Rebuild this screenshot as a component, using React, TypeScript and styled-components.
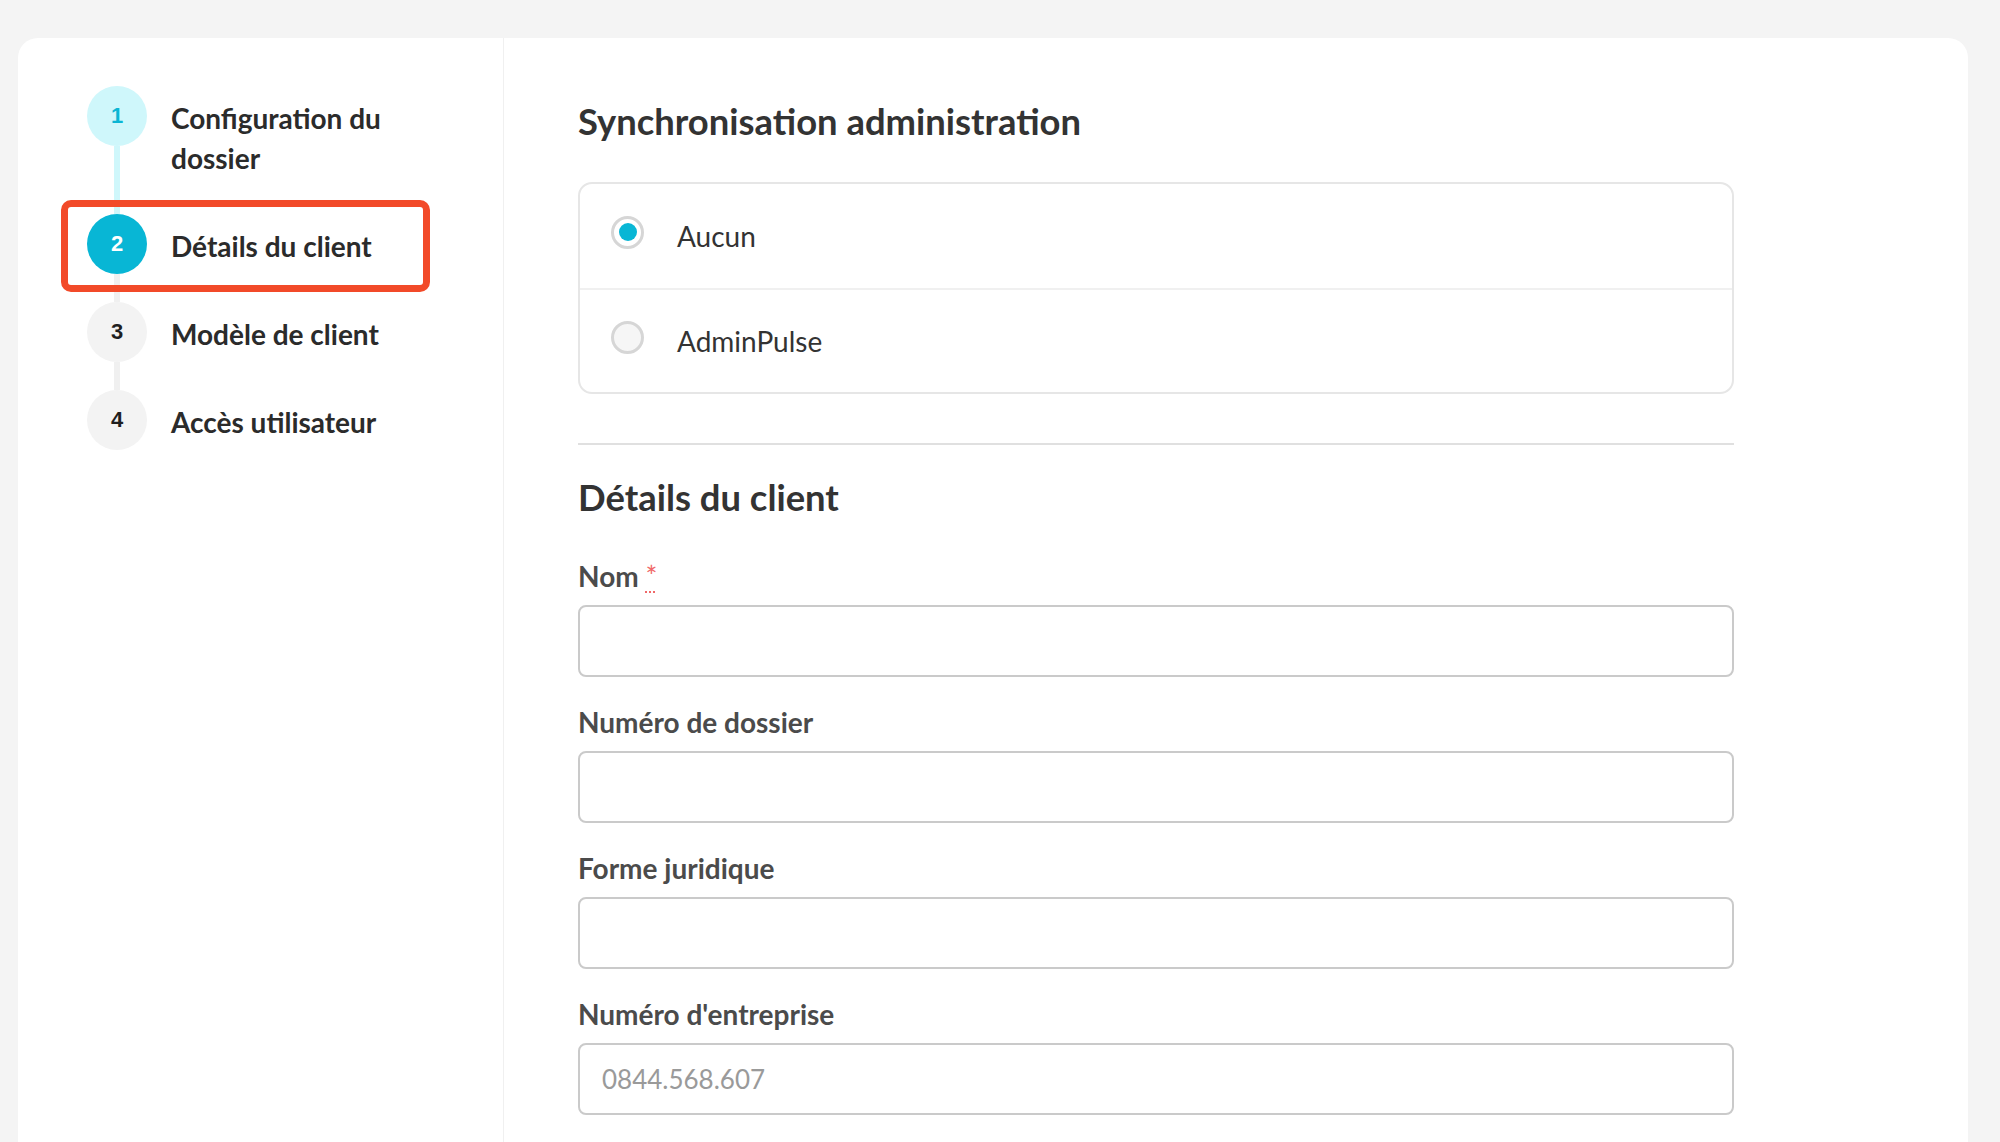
import styled, { createGlobalStyle } from "styled-components";

type StepState = "done" | "active" | "todo";

const steps: { n: number; label: string; state: StepState; highlighted?: boolean }[] = [
  { n: 1, label: "Configuration du dossier", state: "done" },
  { n: 2, label: "Détails du client", state: "active", highlighted: true },
  { n: 3, label: "Modèle de client", state: "todo" },
  { n: 4, label: "Accès utilisateur", state: "todo" },
];

const fields = [
  { label: "Nom", required: true, placeholder: "" },
  { label: "Numéro de dossier", placeholder: "" },
  { label: "Forme juridique", placeholder: "" },
  { label: "Numéro d'entreprise", placeholder: "0844.568.607" },
];

export default function App() {
  return (
    <>
      <GlobalStyle />
      <Page>
        <Card>
          <Sidebar>
            {steps.map((step, i) => (
              <Step key={step.n} $highlighted={step.highlighted}>
                <Track>
                  <Bullet $state={step.state}>{step.n}</Bullet>
                  {i < steps.length - 1 && <Connector $state={step.state} />}
                </Track>
                <StepLabel>{step.label}</StepLabel>
              </Step>
            ))}
          </Sidebar>

          <Main>
            <Content>
              <SectionTitle>Synchronisation administration</SectionTitle>
              <RadioGroup>
                <RadioOption>
                  <Radio $checked />
                  <span>Aucun</span>
                </RadioOption>
                <RadioOption>
                  <Radio />
                  <span>AdminPulse</span>
                </RadioOption>
              </RadioGroup>

              <Divider />

              <SectionTitle>Détails du client</SectionTitle>
              {fields.map((f) => (
                <Field key={f.label}>
                  <FieldLabel>
                    {f.label}
                    {f.required && (
                      <>
                        {" "}
                        <Required title="obligatoire">*</Required>
                      </>
                    )}
                  </FieldLabel>
                  <TextInput type="text" placeholder={f.placeholder} />
                </Field>
              ))}
            </Content>
          </Main>
        </Card>
      </Page>
    </>
  );
}

const GlobalStyle = createGlobalStyle`
  *,
  *::before,
  *::after {
    box-sizing: border-box;
  }

  html,
  body {
    margin: 0;
    padding: 0;
    background: #f4f4f4;
  }

  body {
    font-family: Lato, "Open Sans", sans-serif;
    color: #333;
  }
`;

const Page = styled.div`
  height: 1142px;
  overflow: hidden;
  padding: 38px 32px 0 18px;
`;

const Card = styled.div`
  display: flex;
  min-height: 1120px;
  background: #fff;
  border-radius: 20px 20px 0 0;
`;

const Sidebar = styled.nav`
  width: 486px;
  flex-shrink: 0;
  padding: 48px 0 0 69px;
  border-right: 1px solid #f0f0f0;
`;

const Step = styled.div<{ $highlighted?: boolean }>`
  position: relative;
  display: flex;
  gap: 24px;

  ${({ $highlighted }) =>
    $highlighted &&
    `
    &::after {
      content: "";
      position: absolute;
      left: -26px;
      top: -14px;
      width: 369px;
      height: 92px;
      border: 7px solid #f24a29;
      border-radius: 10px;
      pointer-events: none;
    }
  `}
`;

const Track = styled.div`
  display: flex;
  flex-direction: column;
  align-items: center;
  width: 60px;
  flex-shrink: 0;
`;

const bulletColors: Record<StepState, { bg: string; fg: string }> = {
  done: { bg: "#cff7fb", fg: "#0bb5d3" },
  active: { bg: "#08b6d5", fg: "#ffffff" },
  todo: { bg: "#f3f3f3", fg: "#1f1f1f" },
};

const Bullet = styled.div<{ $state: StepState }>`
  width: 60px;
  height: 60px;
  border-radius: 50%;
  display: flex;
  align-items: center;
  justify-content: center;
  flex-shrink: 0;
  background: ${({ $state }) => bulletColors[$state].bg};
  color: ${({ $state }) => bulletColors[$state].fg};
  font-family: "Liberation Sans", Arial, sans-serif;
  font-weight: 700;
  font-size: 22px;
`;

const Connector = styled.div<{ $state: StepState }>`
  width: 6px;
  flex: 1;
  background: ${({ $state }) => ($state === "done" ? "#cff7fb" : "#f0f0f0")};
`;

const StepLabel = styled.div`
  max-width: 250px;
  padding: 12px 0 36px;
  font-size: 28px;
  line-height: 40px;
  font-weight: 700;
  color: #2b2b2b;
`;

const Main = styled.main`
  flex: 1;
  padding: 62px 0 0 74px;
`;

const Content = styled.div`
  width: 1156px;
`;

const SectionTitle = styled.h2`
  margin: 0 0 41px;
  font-size: 36.4px;
  line-height: 42px;
  font-weight: 700;
  color: #333;
`;

const RadioGroup = styled.div`
  margin-top: -1px;
  border: 2px solid #e6e6e6;
  border-radius: 14px;
  overflow: hidden;
`;

const RadioOption = styled.label`
  display: flex;
  align-items: center;
  gap: 33px;
  height: 104px;
  padding: 0 0 0 31px;
  font-size: 28px;
  color: #333;

  & + & {
    border-top: 2px solid #f0f0f0;
  }
`;

const Radio = styled.span<{ $checked?: boolean }>`
  width: 33px;
  height: 33px;
  margin-bottom: 8px;
  border-radius: 50%;
  border: 3px solid #d6d6d6;
  background: ${({ $checked }) => ($checked ? "#fff" : "#f6f6f6")};
  display: flex;
  align-items: center;
  justify-content: center;
  flex-shrink: 0;

  &::after {
    content: "";
    width: 18px;
    height: 18px;
    border-radius: 50%;
    background: ${({ $checked }) => ($checked ? "#08b6d5" : "transparent")};
  }
`;

const Divider = styled.hr`
  margin: 49px 0 31px;
  border: none;
  height: 2px;
  background: #e0e0e0;
`;

const Field = styled.div`
  margin-bottom: 28px;
`;

const FieldLabel = styled.label`
  display: block;
  margin-bottom: 12px;
  font-size: 28px;
  line-height: 34px;
  font-weight: 700;
  color: #4b4b4b;
`;

const Required = styled.abbr`
  color: #f06868;
  font-weight: 400;
  text-decoration: underline dotted;
  text-decoration-thickness: 2px;
  text-underline-offset: 4px;
  cursor: help;
`;

const TextInput = styled.input`
  display: block;
  width: 100%;
  height: 72px;
  padding: 0 22px;
  border: 2px solid #cacaca;
  border-radius: 8px;
  background: #fff;
  font-family: Lato, "Open Sans", sans-serif;
  font-size: 26px;
  color: #333;
  outline: none;

  &::placeholder {
    color: #9a9a9a;
  }
`;
